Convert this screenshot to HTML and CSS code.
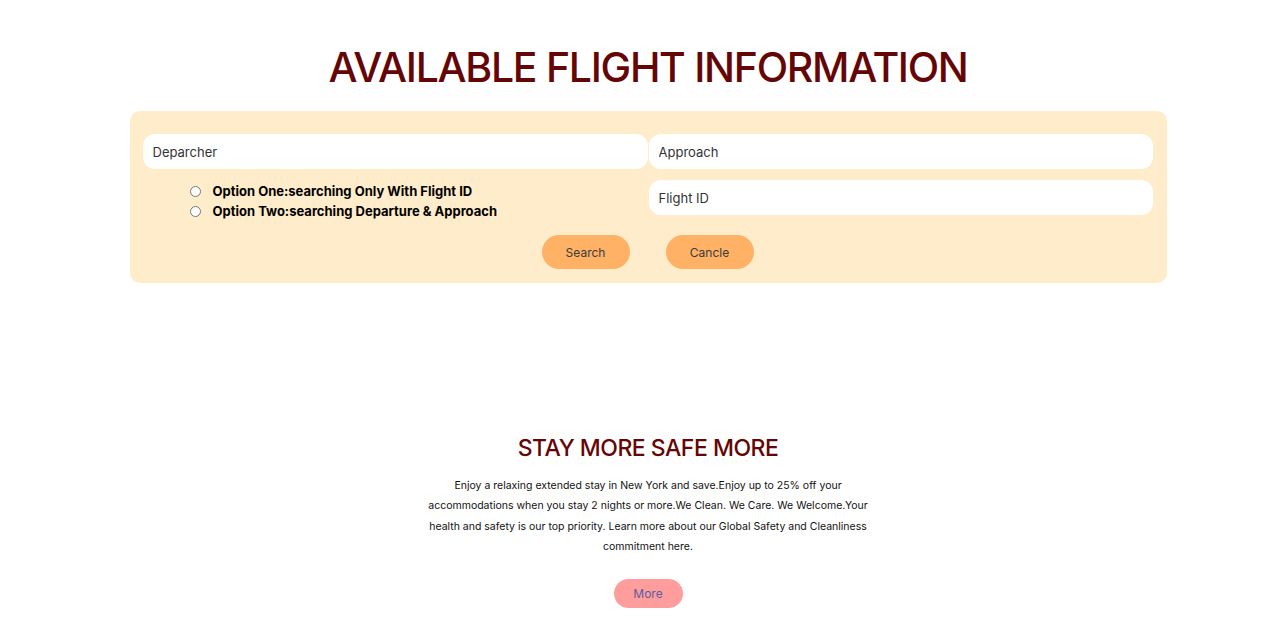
FILE: index.html
```html
<!DOCTYPE html>
<html lang="en">
<head>
<meta charset="utf-8">
<title>Available Flight Information</title>
<link rel="stylesheet" href="styles.css">
</head>
<body>
<div class="page">
  <section class="flight">
    <h1 class="title">AVAILABLE FLIGHT INFORMATION</h1>
    <form class="panel">
      <div class="fields">
        <div class="col">
          <input class="field" type="text" placeholder="Deparcher">
          <div class="options">
            <label class="option"><input type="radio" name="opt"><span>Option One:searching Only With Flight ID</span></label>
            <label class="option"><input type="radio" name="opt"><span>Option Two:searching Departure &amp; Approach</span></label>
          </div>
        </div>
        <div class="col col-right">
          <input class="field" type="text" placeholder="Approach">
          <input class="field" type="text" placeholder="Flight ID">
        </div>
      </div>
      <div class="actions">
        <button type="button" class="btn">Search</button>
        <button type="button" class="btn">Cancle</button>
      </div>
    </form>
  </section>
  <section class="safe">
    <h2 class="safe-title">STAY MORE SAFE MORE</h2>
    <p class="safe-text">Enjoy a relaxing extended stay in New York and save.Enjoy up to 25% off your accommodations when you stay 2 nights or more.We Clean. We Care. We Welcome.Your health and safety is our top priority. Learn more about our Global Safety and Cleanliness commitment here.</p>
    <button type="button" class="more">More</button>
  </section>
</div>
</body>
</html>
```
FILE: styles.css
```css
* { box-sizing: border-box; }
html, body { margin: 0; padding: 0; background: #ffffff; }
body { font-family: Inter, "Noto Sans", "Liberation Sans", sans-serif; color: #000; }

.page { padding-left: 16px; }

.flight { display: flex; flex-direction: column; align-items: center; padding-top: 44px; }

.title {
  margin: 0;
  font-size: 41px;
  font-weight: 500;
  line-height: 46px;
  color: #650606;
  letter-spacing: -1.3px;
}

.panel {
  margin-top: 21px;
  width: 1037px;
  background: #feecca;
  border-radius: 10px;
  padding: 23px 14px 14px 13px;
}

.fields { display: grid; grid-template-columns: 505px 504px; column-gap: 1px; }
.col { display: flex; flex-direction: column; }
.col-right { gap: 11px; }

.field {
  height: 35px;
  border: none;
  border-radius: 12px;
  background: #fff;
  padding: 0 10px;
  font-family: inherit;
  font-size: 13px;
  color: #333;
  outline: none;
}
.field::placeholder { color: #333; }

.options { display: flex; flex-direction: column; padding: 14px 0 0 42px; gap: 3px; }
.option { display: flex; align-items: center; font-size: 13px; font-weight: 700; line-height: 17px; }
.option input { margin: 0 12px 0 5px; width: 11px; height: 11px; }

.actions { display: flex; justify-content: center; gap: 36px; margin-top: 15px; }
.btn {
  width: 88px;
  height: 34px;
  border: none;
  border-radius: 17px;
  background: #ffb165;
  color: #3a3a3a;
  font-family: inherit;
  font-size: 12px;
}

.safe { display: flex; flex-direction: column; align-items: center; padding-top: 150px; }
.safe-title {
  margin: 0;
  font-size: 23px;
  font-weight: 500;
  line-height: 30px;
  color: #650606;
  letter-spacing: -0.5px;
}
.safe-text {
  width: 452px;
  margin: 13px 0 0;
  text-align: center;
  font-size: 10.5px;
  line-height: 20.4px;
  color: #111;
}
.more {
  margin-top: 21px;
  width: 69px;
  height: 29px;
  border: none;
  border-radius: 15px;
  background: #ff9d9d;
  color: #5a5fa0;
  font-family: inherit;
  font-size: 12px;
}
```
